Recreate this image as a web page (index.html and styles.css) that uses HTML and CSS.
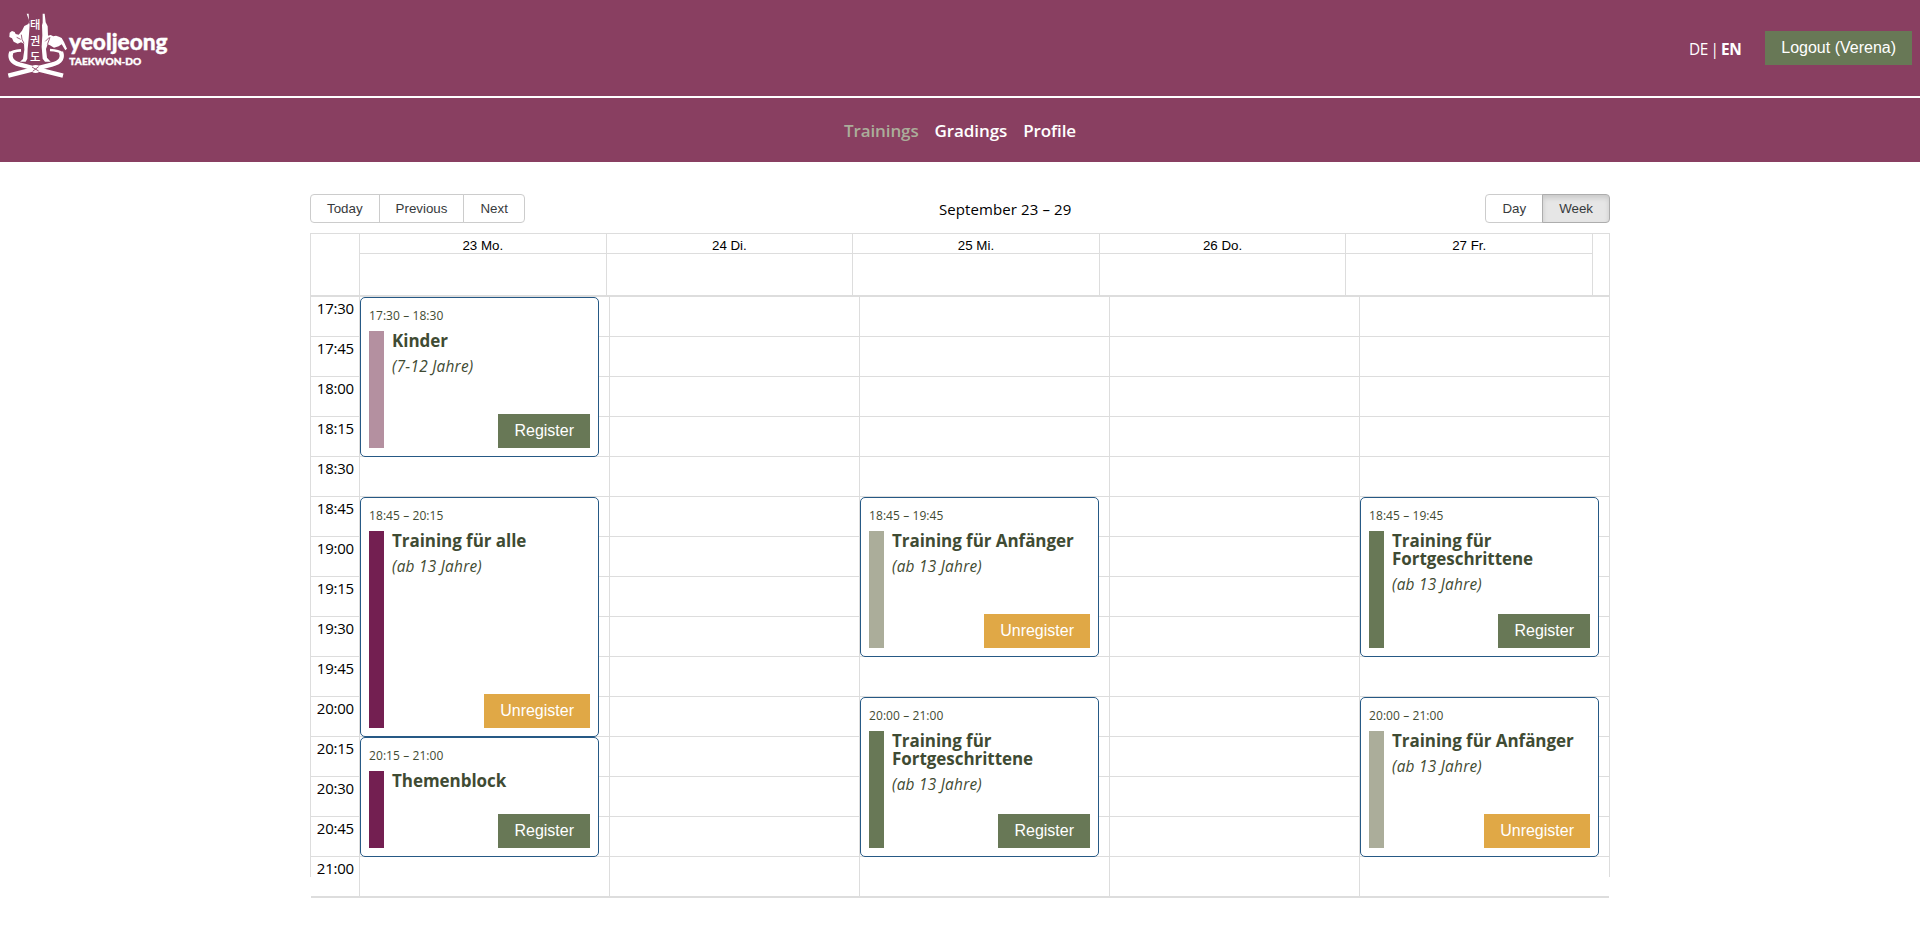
FILE: index.html
```html
<!DOCTYPE html>
<html lang="en">
<head>
<meta charset="utf-8">
<title>Yeoljeong Taekwon-Do – Trainings</title>
<link rel="stylesheet" href="styles.css">
</head>
<body>
<header class="header">
  <svg class="logo" viewBox="0 0 540 288" width="180" height="96" role="img" aria-label="yeoljeong Taekwon-Do">
    <g fill="none" stroke="#fff" stroke-linejoin="round">
      <path d="M34 156c-6 16-2 30 26 38l42 11 87 22" stroke-width="13"/>
      <path d="M183 156c6 16 2 30-28 38l-44 11-86 22" stroke-width="13"/>
      <path d="M31 160c4-5 16-8 32-9M186 160c-6-6-18-9-36-10" stroke-width="8"/>
    </g>
    <g fill="#fff">
      <path d="M80 41h6l1 25 2 8-3 42-3 30-1 30-5 9H60l9-8 4-28-1-18-9-4-10 4-12-6-5-10-8-4 1-13 7-5 8 3 3 6 9 2 10-12 7-14 12-6 3-8z"/>
      <path d="M128 41h6l3 26 6 12 1 28 8-2 8 4 8-2 9 3 8 4 7 12 9 20-5 5-11-18-9 6-14 4-12-7-7-3-5 14 3 26 11 12h-17l-7-9-3-36 2-34-1-30 2-8z"/>
      <ellipse cx="107" cy="207" rx="16" ry="12"/>
    </g>
    <g fill="none" stroke="#893f61" stroke-width="2.5">
      <path d="M50 112l12 6M64 104l2 14 6 12M136 124l12-12M150 112l-8 22M96 201l20 12M98 214l18-14"/>
    </g>
    <g class="logo-hangul">
      <text x="106" y="87">태</text>
      <text x="106" y="135">권</text>
      <text x="106" y="184">도</text>
    </g>
    <text class="logo-name" x="207" y="150" textLength="296" lengthAdjust="spacingAndGlyphs">yeoljeong</text>
    <text class="logo-sub" x="208" y="194" textLength="216" lengthAdjust="spacingAndGlyphs">TAEKWON-DO</text>
  </svg>
  <div class="header-actions">
    <div class="languages">DE | <b>EN</b></div>
    <button class="button logout">Logout (Verena)</button>
  </div>
</header>
<nav class="nav">
  <a class="nav-link active">Trainings</a>
  <a class="nav-link">Gradings</a>
  <a class="nav-link">Profile</a>
</nav>
<main class="calendar">
  <div class="toolbar">
    <div class="button-group"><button>Today</button><button>Previous</button><button>Next</button></div>
    <div class="period">September 23 – 29</div>
    <div class="button-group"><button>Day</button><button class="selected">Week</button></div>
  </div>
  <div class="time-view">
    <div class="week-header">
      <div class="header-gutter"></div>
      <div class="day-header"><div>23 Mo.</div></div>
      <div class="day-header"><div>24 Di.</div></div>
      <div class="day-header"><div>25 Mi.</div></div>
      <div class="day-header"><div>26 Do.</div></div>
      <div class="day-header"><div>27 Fr.</div></div>
      <div class="header-end"></div>
    </div>
    <div class="week-body">
      <div class="gutter">
        <div>17:30</div><div>17:45</div><div>18:00</div><div>18:15</div><div>18:30</div>
        <div>18:45</div><div>19:00</div><div>19:15</div><div>19:30</div><div>19:45</div>
        <div>20:00</div><div>20:15</div><div>20:30</div><div>20:45</div><div>21:00</div>
      </div>
      <div class="day">
        <article class="event from-1730 four">
          <div class="time">17:30 – 18:30</div>
          <div class="event-body"><i class="bar rose"></i><div class="details"><h3>Kinder</h3><p>(7-12 Jahre)</p><button class="button">Register</button></div></div>
        </article>
        <article class="event from-1845 six">
          <div class="time">18:45 – 20:15</div>
          <div class="event-body"><i class="bar plum"></i><div class="details"><h3>Training für alle</h3><p>(ab 13 Jahre)</p><button class="button leave">Unregister</button></div></div>
        </article>
        <article class="event from-2015 three">
          <div class="time">20:15 – 21:00</div>
          <div class="event-body"><i class="bar plum"></i><div class="details"><h3>Themenblock</h3><button class="button">Register</button></div></div>
        </article>
      </div>
      <div class="day"></div>
      <div class="day">
        <article class="event from-1845 four">
          <div class="time">18:45 – 19:45</div>
          <div class="event-body"><i class="bar sage"></i><div class="details"><h3>Training für Anfänger</h3><p>(ab 13 Jahre)</p><button class="button leave">Unregister</button></div></div>
        </article>
        <article class="event from-2000 four">
          <div class="time">20:00 – 21:00</div>
          <div class="event-body"><i class="bar green"></i><div class="details"><h3>Training für Fortgeschrittene</h3><p>(ab 13 Jahre)</p><button class="button">Register</button></div></div>
        </article>
      </div>
      <div class="day"></div>
      <div class="day">
        <article class="event from-1845 four">
          <div class="time">18:45 – 19:45</div>
          <div class="event-body"><i class="bar green"></i><div class="details"><h3>Training für Fortgeschrittene</h3><p>(ab 13 Jahre)</p><button class="button">Register</button></div></div>
        </article>
        <article class="event from-2000 four">
          <div class="time">20:00 – 21:00</div>
          <div class="event-body"><i class="bar sage"></i><div class="details"><h3>Training für Anfänger</h3><p>(ab 13 Jahre)</p><button class="button leave">Unregister</button></div></div>
        </article>
      </div>
    </div>
  </div>
</main>
</body>
</html>
```
FILE: styles.css
```css
* { box-sizing: border-box; }
body { margin: 0; min-height: 100vh; background: #fff; color: #000; font: 15px/24px "Open Sans", "Noto Sans", sans-serif; }
button { font-family: "Liberation Sans", Arial, sans-serif; }

.header { display: flex; justify-content: space-between; align-items: center; height: 98px; padding-right: 8px; background: #893f61; border-bottom: 2px solid #fff; }
.logo { display: block; overflow: visible; }
.logo-hangul { fill: #fff; font: 500 34px "Noto Sans CJK KR", sans-serif; text-anchor: middle; }
.logo-name { fill: #fff; stroke: #fff; stroke-width: 1px; font: 900 69px Lato, sans-serif; }
.logo-sub { fill: #fff; stroke: #fff; stroke-width: 1px; font: 900 28px Lato, sans-serif; }
.header-actions { display: flex; align-items: center; gap: 24px; }
.languages { color: #fff; padding-top: 4px; letter-spacing: -.45px; word-spacing: -1px; font-size: 15.4px; }
.button { display: block; height: 34px; padding: 0 16px 1px; border: 0; border-radius: 0; background: #687856; color: #fff; font-size: 16px; }

.nav { display: flex; justify-content: center; align-items: center; gap: 16px; height: 64px; padding-top: 2px; background: #893f61; }
.nav-link { color: #fff; font-size: 17px; font-weight: 600; letter-spacing: -.1px; }
.nav-link.active { color: #abad9a; }

.calendar { width: 1300px; margin: 32px auto 0; }
.toolbar { display: flex; align-items: center; height: 29px; margin-bottom: 10px; }
.period { flex: 1; text-align: center; padding-top: 1px; letter-spacing: .1px; }
.button-group { display: flex; }
.button-group button { height: 29px; padding: 0 16px; margin-right: -1px; border: 1px solid #ccc; background: #fff; color: #373a3c; font-size: 13.333px; }
.button-group button:first-child { border-radius: 4px 0 0 4px; }
.button-group button:last-child { border-radius: 0 4px 4px 0; margin-right: 0; }
.button-group .selected { background: #e6e6e6; border-color: #adadad; box-shadow: inset 0 3px 5px rgba(0, 0, 0, .125); }

.time-view { display: grid; grid-template-columns: 100%; align-content: start; height: 664px; background: linear-gradient(#ddd, #ddd) left top / 1px 643px no-repeat, linear-gradient(#ddd, #ddd) right top / 1px 643px no-repeat; border-top: 1px solid #ddd; padding: 0 1px; }
.week-header { display: flex; height: 63px; border-bottom: 2px solid #ddd; }
.header-gutter { width: 48px; }
.day-header { flex: 1; border-left: 1px solid #ddd; font: 13.333px/23px "Liberation Sans", Arial, sans-serif; text-align: center; }
.day-header div { height: 20px; border-bottom: 1px solid #ddd; }
.header-end { width: 17px; border-left: 1px solid #ddd; }
.week-body { display: flex; height: 601px; border-bottom: 2px solid #ddd; background: repeating-linear-gradient(#fff 0 39px, #ddd 39px 40px); background-size: 100% 599px; background-repeat: no-repeat; }
.gutter { width: 48px; height: 599px; }
.gutter div { height: 40px; padding-right: 5px; text-align: right; line-height: 22px; letter-spacing: -.2px; }
.day { flex: 1; border-left: 1px solid #ddd; display: grid; grid-template-rows: repeat(14, 40px); padding-right: 10px; }

.event { display: flex; flex-direction: column; padding: 8px; border: 1px solid #265985; border-radius: 5px; background: #fff; color: #3f4b33; }
.from-1730 { grid-row-start: 1; }
.from-1845 { grid-row-start: 6; }
.from-2000 { grid-row-start: 11; }
.from-2015 { grid-row-start: 12; }
.three { grid-row-end: span 3; }
.four { grid-row-end: span 4; }
.six { grid-row-end: span 6; }
.time { height: 25px; font-size: 12px; line-height: 20px; letter-spacing: .08px; }
.event-body { flex: 1; display: flex; gap: 8px; }
.bar { width: 15px; }
.rose { background: #b490a0; }
.plum { background: #731f51; }
.sage { background: #abad9a; }
.green { background: #687856; }
.details { flex: 1; display: flex; flex-direction: column; }
.details h3 { margin: 0; padding-top: 1px; font-size: 17px; line-height: 18px; font-weight: 700; letter-spacing: -.05px; }
.details p { margin: 5px 0 0; font-size: 15.4px; line-height: 24px; font-style: italic; letter-spacing: .25px; }
.details .button { margin-top: auto; align-self: flex-end; }
.leave { background: #e0a846; }
```
